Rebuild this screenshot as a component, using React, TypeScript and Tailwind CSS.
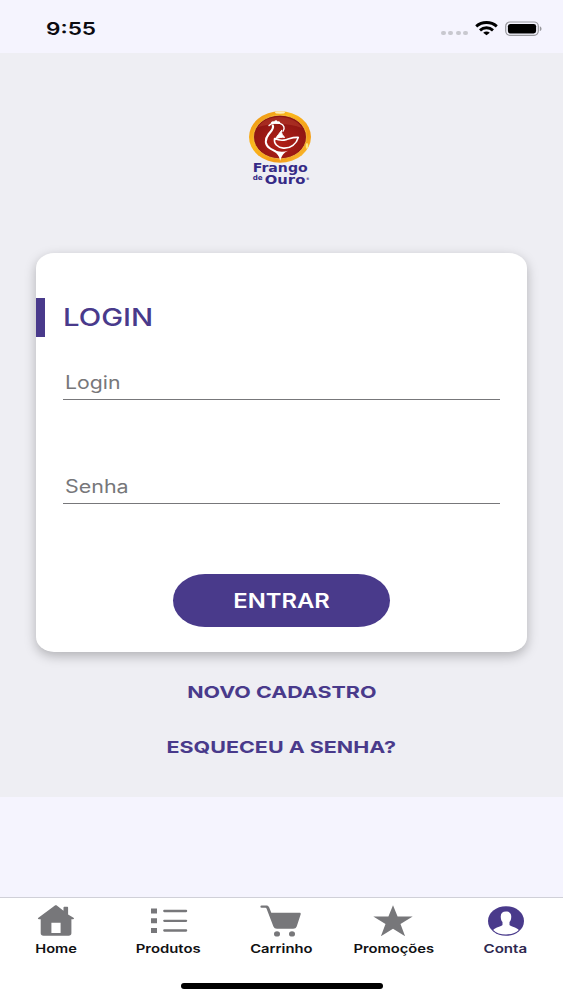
import type { ReactNode } from "react";
import clsx from "clsx";

type Tab = {
  label: string;
  icon: ReactNode;
  labelClass: string;
  active?: boolean;
};

const tabs: Tab[] = [
  { label: "Home", icon: <HomeIcon />, labelClass: "scale-x-[1.22]" },
  { label: "Produtos", icon: <ListIcon />, labelClass: "scale-x-[1.24]" },
  { label: "Carrinho", icon: <CartIcon />, labelClass: "scale-x-[1.23]" },
  { label: "Promoções", icon: <StarIcon />, labelClass: "scale-x-[1.23]" },
  { label: "Conta", icon: <AccountIcon />, labelClass: "scale-x-[1.26]", active: true },
];

function HomeIcon() {
  return (
    <svg width="38" height="32" viewBox="0 0 38 32" fill="currentColor">
      <path d="M17.6.7c.8-.6 1.7-.6 2.5 0l6.4 5V2.8c0-.6.4-1 1-1h2.6c.6 0 1 .4 1 1v6.8l5.4 3.2c.9.6.5 1.5-.5 1.5h-1.6v13.9c0 1.6-1 2.5-2.8 2.5H6.5c-1.8 0-2.8-.9-2.8-2.5V14.300H2c-1.100 0-1.500-.9-.6-1.500zM14.400 17.800v10.100h9.200V17.800z" fillRule="evenodd" />
    </svg>
  );
}

function ListIcon() {
  return (
    <svg width="38" height="32" viewBox="0 0 38 32" fill="currentColor">
      <path d="M1 3.500h6v5H1zM1 13.200h6v5H1zM1 22.900h6v5H1z" />
      <g stroke="currentColor" strokeWidth="2.300" strokeLinecap="round">
        <path d="M14.300 6h21.800M14.300 15.800h21.800M14.300 25.500h21.800" />
      </g>
    </svg>
  );
}

function CartIcon() {
  return (
    <svg width="42" height="32" viewBox="0 0 42 32" fill="currentColor">
      <path d="M1.600.4h4.700c1.400 0 2.200.5 2.700 1.700l2.300 5.700h28.200c1 0 1.500.6 1.200 1.500l-3.900 11.900c-.6 1.700-1.900 2.500-3.700 2.500H17c-1.800 0-3-.8-3.700-2.500L6.500 3.500c-.2-.5-.5-.7-1-.7H1.600C0 2.800 0 .4 1.600.4z" />
      <ellipse cx="17" cy="28.900" rx="3" ry="2.600" />
      <ellipse cx="32" cy="28.900" rx="3" ry="2.600" />
    </svg>
  );
}

function StarIcon() {
  return (
    <svg width="40" height="32" viewBox="0 0 40 32" fill="currentColor">
      <path d="M20 .2l4.600 11.400h15.100L27.500 19l4.600 12.300L20 23.800 7.900 31.300 12.500 19 .3 11.600h15.100z" />
    </svg>
  );
}

function AccountIcon() {
  return (
    <svg width="36" height="32" viewBox="0 0 36 32">
      <ellipse cx="18" cy="16" rx="18" ry="14.800" fill="#493a8b" />
      <path
        d="M18 6.600c3.700 0 5.600 2.200 5.200 5.800-.1 2-.8 3.600-1.700 4.700v3c1 1.700 6.800 2.200 9.300 4.800-2.800 3-7.500 4.500-12.800 4.500s-10-1.500-12.800-4.500c2.500-2.600 8.300-3.100 9.300-4.800v-3c-.9-1.100-1.600-2.700-1.700-4.700-.4-3.600 1.500-5.800 5.200-5.800z"
        fill="#fff"
      />
    </svg>
  );
}

function WifiIcon() {
  return (
    <svg width="23" height="15" viewBox="0 0 23 15" fill="none" stroke="#000" strokeWidth="3">
      <path d="M1.200 5.300c5.900-5 14.700-5 20.600 0" />
      <path d="M5 9.300c3.800-3.300 9.200-3.300 13 0" />
      <path d="M11.500 14.300l-3.300-2.500c1.900-1.600 4.700-1.600 6.600 0z" fill="#000" stroke="none" />
    </svg>
  );
}

function BatteryIcon() {
  return (
    <svg width="37" height="16" viewBox="0 0 37 16">
      <rect x=".7" y="1" width="32.600" height="13.300" rx="4.200" fill="none" stroke="#98989d" strokeWidth="1.200" />
      <rect x="2.900" y="2.900" width="28.200" height="9.500" rx="2.400" fill="#000" />
      <path d="M34.800 5.300c2.300.8 2.300 3.900 0 4.700z" fill="#98989d" />
    </svg>
  );
}

function Logo() {
  return (
    <svg width="66" height="78" viewBox="0 0 66 78" aria-label="Frango de Ouro">
      <defs>
        <linearGradient id="gold" x1="0" y1="0" x2="1" y2="1">
          <stop offset="0" stopColor="#e98a12" />
          <stop offset=".35" stopColor="#fbb81c" />
          <stop offset=".7" stopColor="#f39a16" />
          <stop offset="1" stopColor="#fccb3a" />
        </linearGradient>
        <radialGradient id="red" cx=".5" cy=".65" r=".6">
          <stop offset="0" stopColor="#b01f16" />
          <stop offset="1" stopColor="#8c1512" />
        </radialGradient>
      </defs>
      <ellipse cx="33" cy="27" rx="31" ry="25.700" fill="url(#gold)" />
      <ellipse cx="33" cy="27" rx="26.500" ry="21.800" fill="url(#red)" stroke="#fbd04a" strokeWidth=".7" />
      <path d="M11 17c8-13 35-14 44 1-13-5-30-5-44-1z" fill="#d2523c" opacity=".35" />
      <ellipse cx="33" cy="2.500" rx="5" ry="1.200" fill="#fff0b8" />
      <ellipse cx="60" cy="36" rx="1.300" ry="3" fill="#ffe77d" />
      {/* rooster: comb, neck and breast, wing, tail drop */}
      <g fill="none" stroke="#fff" strokeLinecap="round" strokeLinejoin="round">
        <path d="M22 15.400c2.500-2.500 7-3.400 11-2 4.200 1.500 5.200 4.600 3 7.800" strokeWidth="1.400" />
        <path d="M25.800 15.500c1.400 3-1.600 5.500-4.200 8.800-4 5.200-3.500 10.300.9 13.700 3 2.300 7.200 3 9.500 6.500" strokeWidth="2.200" />
        <path d="M27.600 28.500c-1.100 5.200 2.900 9.100 8.700 9.600 7.600.6 13.100-4.400 15-10.700-5.800-.4-8.300 1.300-12.200 2.300-3.600.9-7.400.7-11.500-1.200z" strokeWidth="1.600" />
        <path d="M34.500 20.500c-.2 3 .8 4.800 3.200 6.800-2.900-.2-6 .2-9.500 1.700 2.300-3.200 3.900-5.500 6.300-8.500z" fill="#fff" strokeWidth="1" />
      </g>
      <g fill="#fff">
        <path d="M23.800 13.800c.1-2.200 1.700-3.300 3.300-2.200.9-1.600 2.900-1.700 3.500-.2 2-.5 3.100.8 2.400 2.600z" />
        <path d="M26.500 39.500c4.500 2.700 10 2.700 14.500 1.300-4 1.700-6 4.200-7.800 9.900-1.100-4.700-2.600-6.800-6.700-11.200z" />
      </g>
      <g fill="#352a86" fontFamily="'DejaVu Sans', sans-serif" fontWeight="700">
        <text x="5.700" y="62" fontSize="11.500" textLength="55" lengthAdjust="spacingAndGlyphs">Frango</text>
        <text x="5.700" y="70.300" fontSize="7" textLength="10" lengthAdjust="spacingAndGlyphs">de</text>
        <text x="17.800" y="73.800" fontSize="12" textLength="40.500" lengthAdjust="spacingAndGlyphs">Ouro</text>
        <text x="58.900" y="69.800" fontSize="3.500">®</text>
      </g>
    </svg>
  );
}

type FieldProps = {
  label: string;
  labelClass: string;
};

function Field({ label, labelClass }: FieldProps) {
  return (
    <div className="flex h-[35px] w-[437px] items-center border-b border-[#77777a] pl-0.5 pt-px">
      <span className={clsx("origin-left text-[18px] leading-none text-[#77777a]", labelClass)}>
        {label}
      </span>
    </div>
  );
}

export default function App() {
  return (
    <div className="flex h-[1000px] w-[563px] flex-col overflow-hidden bg-[#f5f4fe] font-['Inter',sans-serif]">
      <header className="flex h-[53px] shrink-0 items-center justify-between pl-[45.500px] pr-[21px] pt-1">
        <span className="origin-left scale-x-[1.29] text-[17.5px] font-semibold leading-none text-[#0b0b10]">
          9:55
        </span>
        <div className="flex items-center">
          <div className="mr-[7px] mt-[9px] flex gap-[2.5px]">
            {[0, 1, 2, 3].map((dot) => (
              <span key={dot} className="h-1 w-[5px] rounded-full bg-[#c8c8cf]" />
            ))}
          </div>
          <WifiIcon />
          <span className="ml-[7px]">
            <BatteryIcon />
          </span>
        </div>
      </header>

      <main className="flex h-[744px] shrink-0 flex-col items-center bg-[#eeeef3] pt-[56.500px]">
        <div className="flex h-[143px] w-full justify-center pr-[3px]">
          <Logo />
        </div>

        <section className="flex h-[399.500px] w-[491px] flex-col rounded-[18px/15px] bg-white pt-[45.500px] shadow-[0_4px_12px_rgba(0,0,0,0.26)]">
          <div className="flex h-[39px] items-center border-l-[9px] border-[#493a8b] pl-[18px]">
            <h1 className="origin-left scale-x-[1.22] text-[24px] font-medium leading-none text-[#493a8b]">
              LOGIN
            </h1>
          </div>
          <div className="mt-7 flex flex-col gap-[69px] pl-[27px]">
            <Field label="Login" labelClass="scale-x-[1.18]" />
            <Field label="Senha" labelClass="scale-x-[1.19]" />
          </div>
          <button
            type="button"
            className="mt-[70px] flex h-[53px] w-[217px] items-center justify-center self-center rounded-[32px/26.5px] bg-[#493a8b] pt-[2px] text-white"
          >
            <span className="scale-x-[1.22] text-[19.500px] font-semibold leading-none">ENTRAR</span>
          </button>
        </section>

        <div className="mt-[31.500px] flex flex-col items-center gap-[38px] text-[16.500px] font-bold leading-[17px] text-[#493a8b]">
          <a href="#" className="scale-x-[1.3]">NOVO CADASTRO</a>
          <a href="#" className="scale-x-[1.3]">ESQUECEU A SENHA?</a>
        </div>
      </main>

      <nav className="mt-auto flex h-[103px] shrink-0 flex-col items-center border-t border-[#d0d0d8] bg-white pt-[7px]">
        <div className="grid w-full grid-cols-5 pr-px">
          {tabs.map((tab) => (
            <a
              key={tab.label}
              href="#"
              className={clsx(
                "flex flex-col items-center",
                tab.active ? "text-[#493a8b]" : "text-[#77777a]",
              )}
            >
              {tab.icon}
              <span
                className={clsx(
                  "mt-1 text-[12px] font-semibold leading-[15px]",
                  tab.active ? "text-[#2f2950]" : "text-[#111113]",
                  tab.labelClass,
                )}
              >
                {tab.label}
              </span>
            </a>
          ))}
        </div>
        <div className="mt-[26.500px] h-[6.500px] w-[202px] rounded-full bg-black" />
      </nav>
    </div>
  );
}
